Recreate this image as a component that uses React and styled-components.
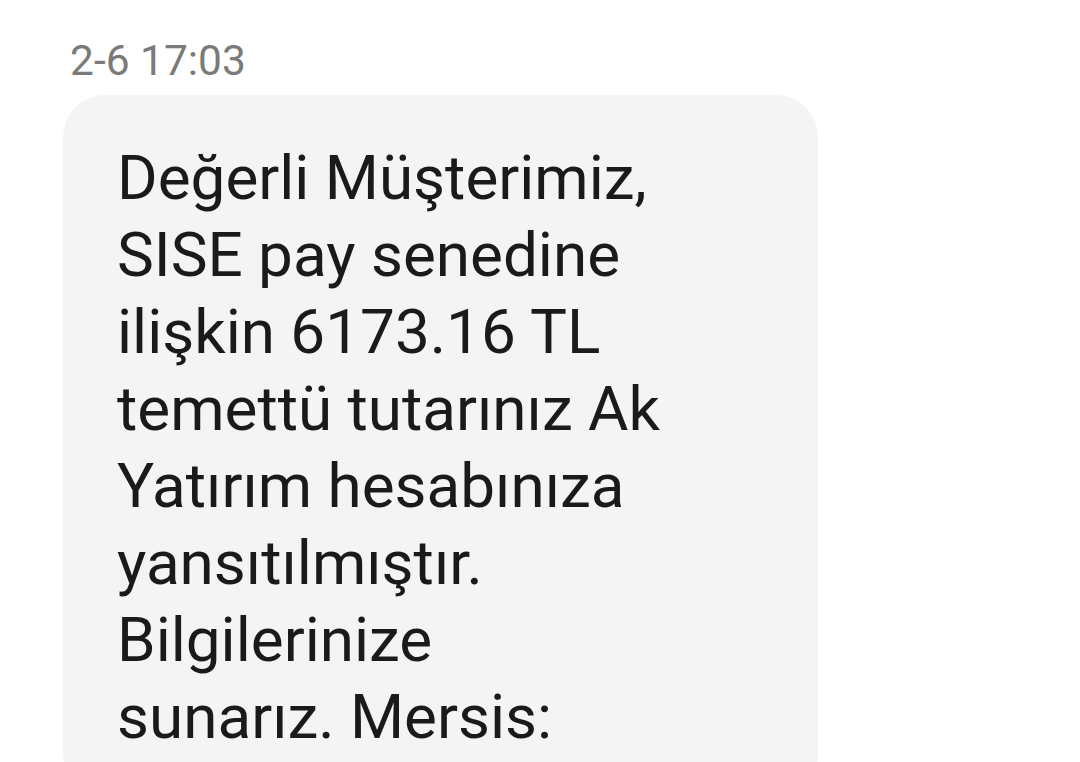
import React from 'react';
import styled, { createGlobalStyle } from 'styled-components';

const GlobalStyle = createGlobalStyle`
  html, body {
    margin: 0;
    padding: 0;
    background: #ffffff;
    overflow: hidden;
  }
  body {
    font-family: Roboto, "Noto Sans", sans-serif;
  }
`;

const Thread = styled.div`
  width: 1080px;
  height: 762px;
  overflow: hidden;
  padding: 37px 0 0 63px;
  box-sizing: border-box;
  display: flex;
  flex-direction: column;
  align-items: flex-start;
`;

const Stamp = styled.div`
  font-size: 42.5px;
  line-height: 48px;
  color: #7a7a7a;
  margin-left: 7px;
  margin-bottom: 10px;
`;

const Bubble = styled.div`
  width: 755px;
  box-sizing: border-box;
  background: #f4f4f4;
  border-radius: 42px;
  padding: 44px 54px 40px 54px;
`;

const Body = styled.p`
  margin: 0;
  font-size: 62px;
  line-height: 77px;
  color: #1a1a1a;
`;

const lines = [
  'Değerli Müşterimiz,',
  'SISE pay senedine',
  'ilişkin 6173.16 TL',
  'temettü tutarınız Ak',
  'Yatırım hesabınıza',
  'yansıtılmıştır.',
  'Bilgilerinize',
  'sunarız. Mersis:',
];

export default function App() {
  return (
    <>
      <GlobalStyle />
      <Thread>
        <Stamp>2-6 17:03</Stamp>
        <Bubble>
          <Body>
            {lines.map((l, i) => (
              <React.Fragment key={i}>
                {l}
                <br />
              </React.Fragment>
            ))}
          </Body>
        </Bubble>
      </Thread>
    </>
  );
}
